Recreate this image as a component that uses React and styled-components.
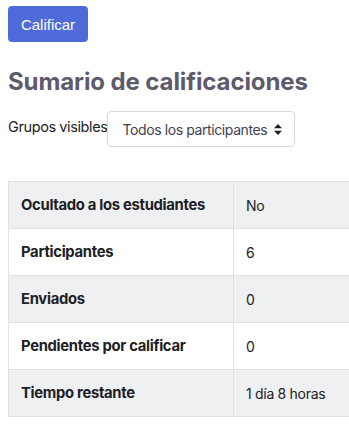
import React from "react";
import styled, { createGlobalStyle } from "styled-components";

const rows = [
  { label: "Ocultado a los estudiantes", value: "No" },
  { label: "Participantes", value: "6" },
  { label: "Enviados", value: "0" },
  { label: "Pendientes por calificar", value: "0" },
  { label: "Tiempo restante", value: "1 día 8 horas" },
];

export default function App() {
  return (
    <Page>
      <GlobalStyle />
      <GradeButton>Calificar</GradeButton>
      <Title>Sumario de calificaciones</Title>
      <GroupRow>
        <GroupLabel>Grupos visibles</GroupLabel>
        <Select>
          <span>Todos los participantes</span>
          <svg width="8" height="11" viewBox="0 0 8 11">
            <path d="M4 0 L8 4.3 H0 Z M4 11 L8 6.7 H0 Z" fill="#1d2125" />
          </svg>
        </Select>
      </GroupRow>
      <TableWrap>
        <Table>
          <tbody>
            {rows.map((row, i) => (
              <Row key={row.label} striped={i % 2 === 0}>
                <HeadCell>{row.label}</HeadCell>
                <Cell>{row.value}</Cell>
              </Row>
            ))}
          </tbody>
        </Table>
      </TableWrap>
    </Page>
  );
}

const GlobalStyle = createGlobalStyle`
  body {
    margin: 0;
    background: #fff;
    overflow: hidden;
    font-family: Inter, "Liberation Sans", sans-serif;
    color: #1d2125;
  }
`;

const Page = styled.div`
  padding: 6px 0 0 8px;
  display: flex;
  flex-direction: column;
  align-items: flex-start;
`;

const GradeButton = styled.button`
  background: #4f6bd9;
  color: #fff;
  border: none;
  border-radius: 4px;
  width: 80px;
  height: 36px;
  font-family: "Liberation Sans", Arial, sans-serif;
  font-size: 15px;
  padding: 0;
`;

const Title = styled.h2`
  margin: 25px 0 0;
  font-size: 24px;
  font-weight: 700;
  color: #5d5b6b;
  letter-spacing: -0.1px;
  line-height: 30px;
`;

const GroupRow = styled.div`
  display: flex;
  align-items: flex-start;
  margin-top: 14px;
`;

const GroupLabel = styled.span`
  font-size: 14.5px;
  letter-spacing: -0.4px;
  color: #1d2125;
  padding-top: 7px;
`;

const Select = styled.div`
  width: 188px;
  height: 36px;
  box-sizing: border-box;
  border: 1px solid #d6d8dc;
  border-radius: 4px;
  display: flex;
  align-items: center;
  justify-content: space-between;
  padding: 0 12px 0 14px;
  font-size: 14px;
  letter-spacing: -0.4px;
  white-space: nowrap;
  color: #40424f;

  svg {
    flex-shrink: 0;
  }
`;

const TableWrap = styled.div`
  margin-top: 34px;
  width: 341px;
  overflow: hidden;
`;

const Table = styled.table`
  width: 360px;
  border-collapse: collapse;
  font-size: 14.8px;
`;

const Row = styled.tr`
  background: ${(p) => (p.striped ? "#eff0f2" : "#fff")};
  height: 47px;
`;

const HeadCell = styled.th`
  width: 225px;
  box-sizing: border-box;
  text-align: left;
  padding: 0 12px;
  font-weight: 700;
  letter-spacing: -0.3px;
  border: 1px solid #dee2e6;
`;

const Cell = styled.td`
  padding: 0 12px;
  font-size: 14px;
  letter-spacing: -0.3px;
  border: 1px solid #dee2e6;
`;
